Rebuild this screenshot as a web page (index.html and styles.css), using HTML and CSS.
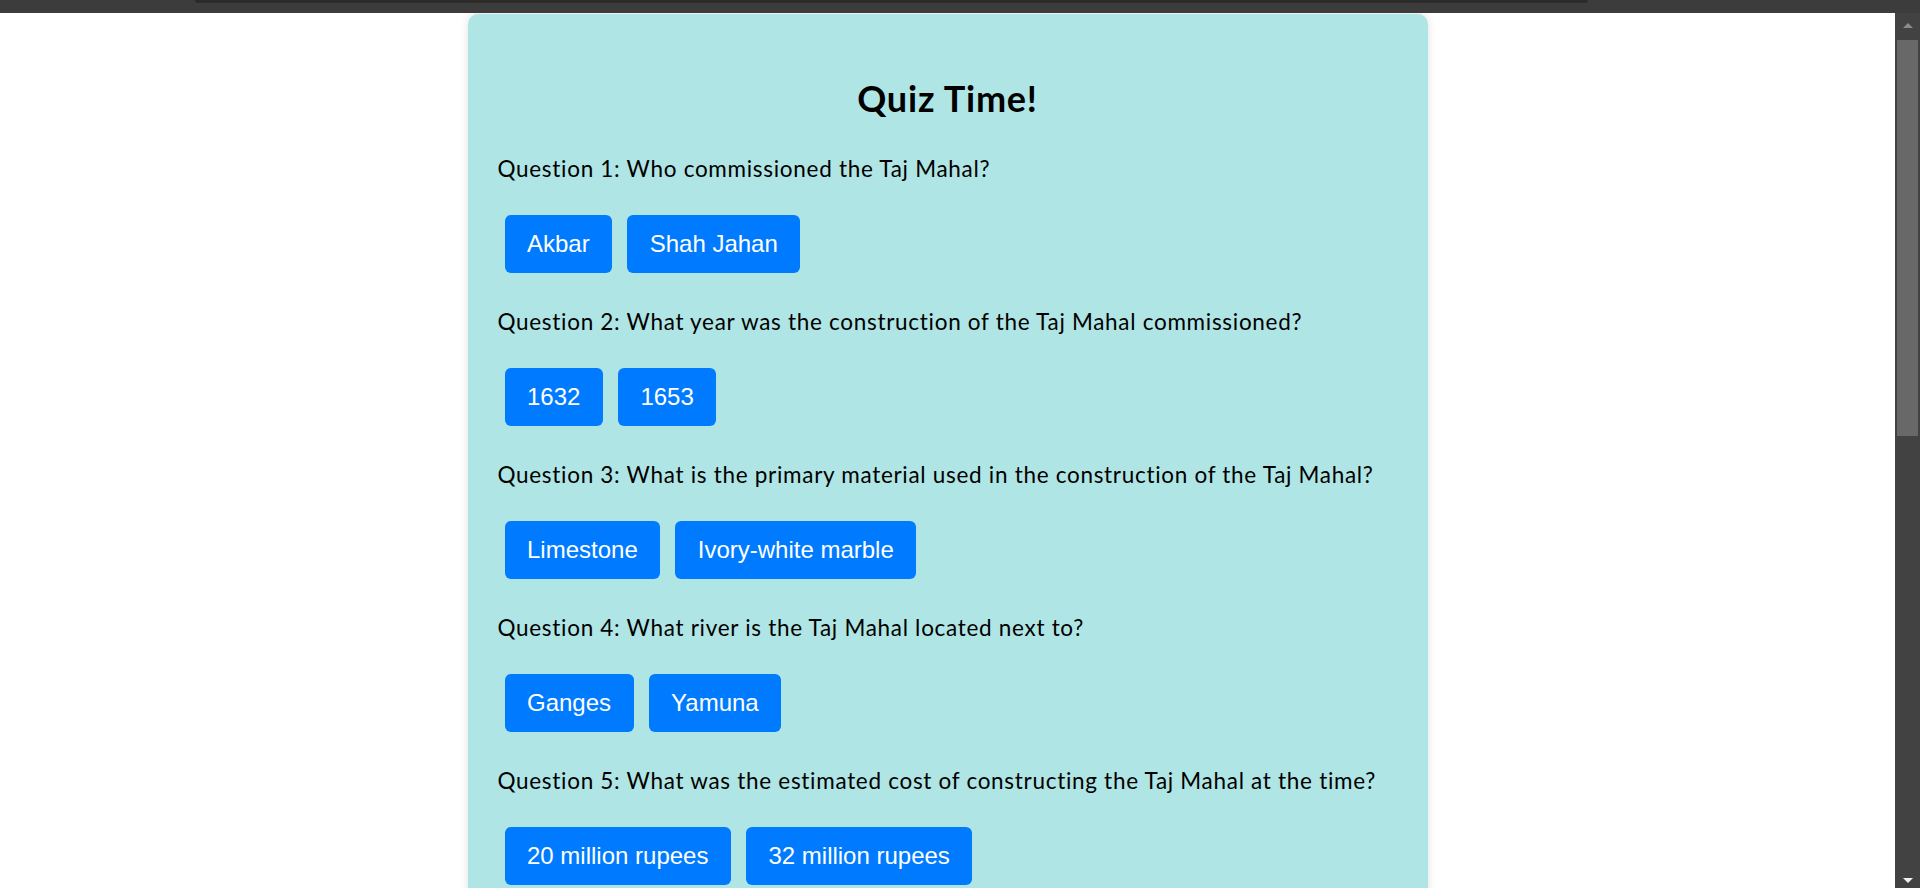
FILE: index.html
```html
<!DOCTYPE html>
<html lang="en">
<head>
<meta charset="utf-8">
<title>Quiz Time!</title>
<link rel="stylesheet" href="styles.css">
</head>
<body>
<div class="chrome"><div class="chrome-pill"></div></div>
<div class="viewport">
  <main class="page">
    <section class="card">
      <h1 class="title">Quiz Time!</h1>
      <div class="question">
        <p class="q-text">Question 1: Who commissioned the Taj Mahal?</p>
        <div class="answers"><button class="answer">Akbar</button><button class="answer">Shah Jahan</button></div>
      </div>
      <div class="question">
        <p class="q-text">Question 2: What year was the construction of the Taj Mahal commissioned?</p>
        <div class="answers"><button class="answer">1632</button><button class="answer">1653</button></div>
      </div>
      <div class="question">
        <p class="q-text">Question 3: What is the primary material used in the construction of the Taj Mahal?</p>
        <div class="answers"><button class="answer">Limestone</button><button class="answer">Ivory-white marble</button></div>
      </div>
      <div class="question">
        <p class="q-text">Question 4: What river is the Taj Mahal located next to?</p>
        <div class="answers"><button class="answer">Ganges</button><button class="answer">Yamuna</button></div>
      </div>
      <div class="question">
        <p class="q-text">Question 5: What was the estimated cost of constructing the Taj Mahal at the time?</p>
        <div class="answers"><button class="answer">20 million rupees</button><button class="answer">32 million rupees</button></div>
      </div>
    </section>
  </main>
  <div class="scrollbar">
    <div class="arrow arrow-up"></div>
    <div class="thumb"></div>
    <div class="track-rest"></div>
    <div class="arrow arrow-down"></div>
  </div>
</div>
</body>
</html>
```

FILE: styles.css
```css
html, body {
  margin: 0;
  padding: 0;
  height: 888px;
  overflow: hidden;
  background: #ffffff;
}

.chrome {
  height: 13px;
  background: #3c3c3c;
  display: flex;
  padding-left: 195px;
}

.chrome-pill {
  width: 1393px;
  height: 3px;
  background: #2b2b2b;
  border-radius: 0 0 8px 8px;
}

.viewport {
  display: flex;
  height: 875px;
}

.page {
  flex: 1;
  background: #ffffff;
  overflow: hidden;
  display: flex;
  justify-content: center;
  align-items: flex-start;
}

.card {
  box-sizing: border-box;
  width: 960px;
  margin-top: 1px;
  padding: 62px 30px 40px;
  background: #b0e5e5;
  border-radius: 10px;
  box-shadow: 0 0 10px rgba(0, 0, 0, 0.12);
  font-family: Lato, "Open Sans", sans-serif;
  color: #000;
}

.title {
  margin: 0 0 34px;
  font-size: 36px;
  line-height: 44px;
  font-weight: 700;
  letter-spacing: 0.8px;
  text-align: center;
}

.question {
  margin-bottom: 34px;
}

.q-text {
  margin: 0;
  font-size: 22.5px;
  line-height: 30px;
  letter-spacing: 0.7px;
}

.answers {
  display: flex;
  gap: 15px;
  margin: 31px 0 0 7px;
}

.answer {
  font-family: "Liberation Sans", Arial, sans-serif;
  font-size: 24px;
  line-height: 28px;
  padding: 15px 22.5px;
  background: #007bff;
  color: #ffffff;
  border: none;
  border-radius: 6px;
}

.scrollbar {
  width: 25px;
  background: #424242;
  display: flex;
  flex-direction: column;
  align-items: center;
}

.arrow {
  width: 0;
  height: 0;
  border-left: 5px solid transparent;
  border-right: 5px solid transparent;
}

.arrow-up {
  margin-top: 10px;
  border-bottom: 5px solid #8a8a8a;
}

.arrow-down {
  margin-bottom: 5px;
  border-top: 5px solid #f0f0f0;
}

.thumb {
  width: 21px;
  height: 396px;
  margin-top: 12px;
  background: #686868;
}

.track-rest {
  flex: 1;
}
```
